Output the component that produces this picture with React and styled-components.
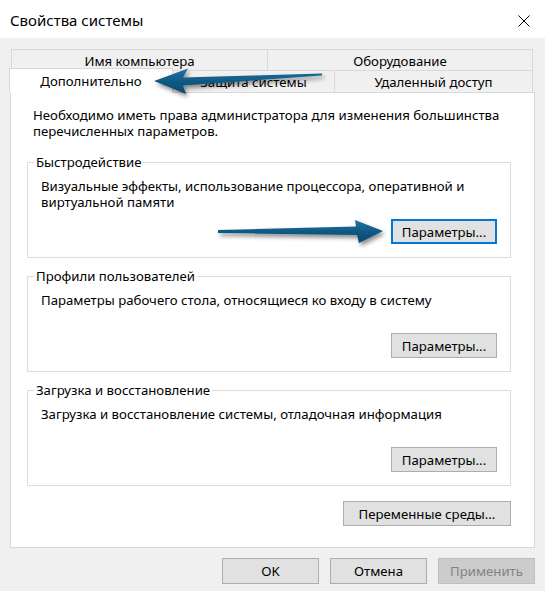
import React from 'react';
import styled, { createGlobalStyle, css } from 'styled-components';

const GlobalStyle = createGlobalStyle`
  html, body {
    margin: 0;
    padding: 0;
    background: #f0f0f0;
  }
  body {
    font-family: 'Noto Sans', 'Segoe UI', sans-serif;
    font-size: 13.2px;
    color: #000;
  }
  * {
    box-sizing: border-box;
  }
`;

const groups = [
  {
    title: 'Быстродействие',
    text: 'Визуальные эффекты, использование процессора, оперативной и виртуальной памяти',
    focused: true,
  },
  {
    title: 'Профили пользователей',
    text: 'Параметры рабочего стола, относящиеся ко входу в систему',
  },
  {
    title: 'Загрузка и восстановление',
    text: 'Загрузка и восстановление системы, отладочная информация',
  },
];

const Arrows = () => (
  <Overlay width="545" height="591" viewBox="0 0 545 591">
    <defs>
      <linearGradient id="arrowFill" x1="0" y1="0" x2="0" y2="1">
        <stop offset="0" stopColor="#2373a0" />
        <stop offset="0.5" stopColor="#0f5a85" />
        <stop offset="1" stopColor="#0a4768" />
      </linearGradient>
      <filter id="arrowShadow" x="-10%" y="-50%" width="120%" height="220%">
        <feDropShadow dx="2" dy="3" stdDeviation="2" floodColor="#000" floodOpacity="0.45" />
      </filter>
    </defs>
    <g fill="url(#arrowFill)" filter="url(#arrowShadow)">
      {/* pointing left, at the selected tab */}
      <path d="M154 81 L188 68.5 L183 77.5 L322 73.5 L322 75.5 L183 85.5 L186 94 Z" />
      {/* pointing right, at the first settings button */}
      <path d="M218 230 L356 226.5 L355 220 L383 231 L359 243 L357 235 L218 233 Z" />
    </g>
  </Overlay>
);

const CloseIcon = () => (
  <svg width="12" height="12" viewBox="0 0 12 12">
    <path d="M0.5 0.5 L11.5 11.5 M11.5 0.5 L0.5 11.5" stroke="#000" strokeWidth="1" fill="none" />
  </svg>
);

const App = () => {
  return (
    <>
      <GlobalStyle />
      <Window>
        <TitleBar>
          <Title>Свойства системы</Title>
          <CloseButton>
            <CloseIcon />
          </CloseButton>
        </TitleBar>
        <Body>
          <TabStrip>
            <TabRow height={21}>
              <Tab w={257}>Имя компьютера</Tab>
              <Tab w={266}>Оборудование</Tab>
            </TabRow>
            <TabRow height={22}>
              <Tab w={164} selected>
                Дополнительно
              </Tab>
              <Tab w={163}>Защита системы</Tab>
              <Tab w={199}>Удаленный доступ</Tab>
            </TabRow>
          </TabStrip>
          <Panel>
            <Intro>
              Необходимо иметь права администратора для изменения большинства
              <br />
              перечисленных параметров.
            </Intro>
            {groups.map((g) => (
              <Group key={g.title}>
                <Legend>{g.title}</Legend>
                <Description>{g.text}</Description>
                <ButtonRow>
                  <Button w={106} focused={g.focused}>
                    Параметры...
                  </Button>
                </ButtonRow>
              </Group>
            ))}
            <EnvRow>
              <Button w={168}>Переменные среды...</Button>
            </EnvRow>
          </Panel>
          <Footer>
            <Button w={97} h={26}>
              OK
            </Button>
            <Button w={97} h={26}>
              Отмена
            </Button>
            <Button w={97} h={26} disabled>
              Применить
            </Button>
          </Footer>
        </Body>
        <Arrows />
      </Window>
    </>
  );
};

const Window = styled.div`
  position: relative;
  width: 545px;
  height: 591px;
  background: #f0f0f0;
  overflow: hidden;
  display: flex;
  flex-direction: column;
`;

const TitleBar = styled.div`
  height: 38px;
  flex: none;
  background: #fff;
  display: flex;
  align-items: center;
  justify-content: space-between;
  padding-left: 10px;
`;

const Title = styled.div`
  font-size: 15px;
  line-height: 20px;
  padding-top: 2px;
`;

const CloseButton = styled.div`
  width: 42px;
  height: 38px;
  display: flex;
  align-items: center;
  justify-content: center;
  padding-top: 3px;
`;

const Body = styled.div`
  flex: 1;
  padding: 11px 10px 0 10px;
  display: flex;
  flex-direction: column;
`;

const TabStrip = styled.div`
  padding-left: 1px;
`;

const TabRow = styled.div`
  display: flex;
  align-items: flex-start;
  height: ${(p) => p.height}px;
`;

const Tab = styled.div`
  flex: none;
  width: ${(p) => p.w}px;
  height: 100%;
  margin-left: -1px;
  border: 1px solid #d9d9d9;
  border-bottom: none;
  background: #f0f0f0;
  display: flex;
  align-items: center;
  justify-content: center;
  line-height: 16px;
  padding-top: 1px;
  white-space: nowrap;
  &:first-child {
    margin-left: 0;
  }
  ${(p) =>
    p.selected &&
    css`
      position: relative;
      z-index: 2;
      margin-left: -2px;
      margin-top: -2px;
      height: 25px;
      padding-top: 0;
      background: #fff;
      &:first-child {
        margin-left: -2px;
      }
    `};
`;

const Panel = styled.div`
  width: 525px;
  background: #fff;
  border: 1px solid #d9d9d9;
  padding: 14px 23px 21px 16px;
`;

const Intro = styled.p`
  margin: 0;
  padding-left: 6px;
  line-height: 16px;
  white-space: nowrap;
`;

const Group = styled.fieldset`
  margin: 10px 0 0;
  padding: 8px 13px 13px 13px;
  border: 1px solid #dcdcdc;
  min-width: 0;
  &:first-of-type {
    margin-top: 15px;
  }
`;

const Legend = styled.legend`
  margin-left: -7px;
  padding: 0 2px;
  line-height: 16px;
`;

const Description = styled.p`
  margin: 0;
  min-height: 32px;
  line-height: 16px;
`;

const ButtonRow = styled.div`
  display: flex;
  justify-content: flex-end;
  margin-top: 9px;
`;

const EnvRow = styled.div`
  display: flex;
  justify-content: flex-end;
  margin-top: 15px;
`;

const Button = styled.button`
  flex: none;
  width: ${(p) => p.w}px;
  height: ${(p) => p.h || 25}px;
  padding: 0;
  font: inherit;
  color: #000;
  background: #e1e1e1;
  border: 1px solid #adadad;
  ${(p) =>
    p.focused &&
    css`
      border: 2px solid #0078d7;
    `};
  &:disabled {
    background: #cccccc;
    border-color: #bfbfbf;
    color: #838383;
  }
`;

const Footer = styled.div`
  display: flex;
  justify-content: flex-end;
  gap: 11px;
  padding-top: 10px;
`;

const Overlay = styled.svg`
  position: absolute;
  top: 0;
  left: 0;
  pointer-events: none;
  z-index: 5;
`;

export default App;
